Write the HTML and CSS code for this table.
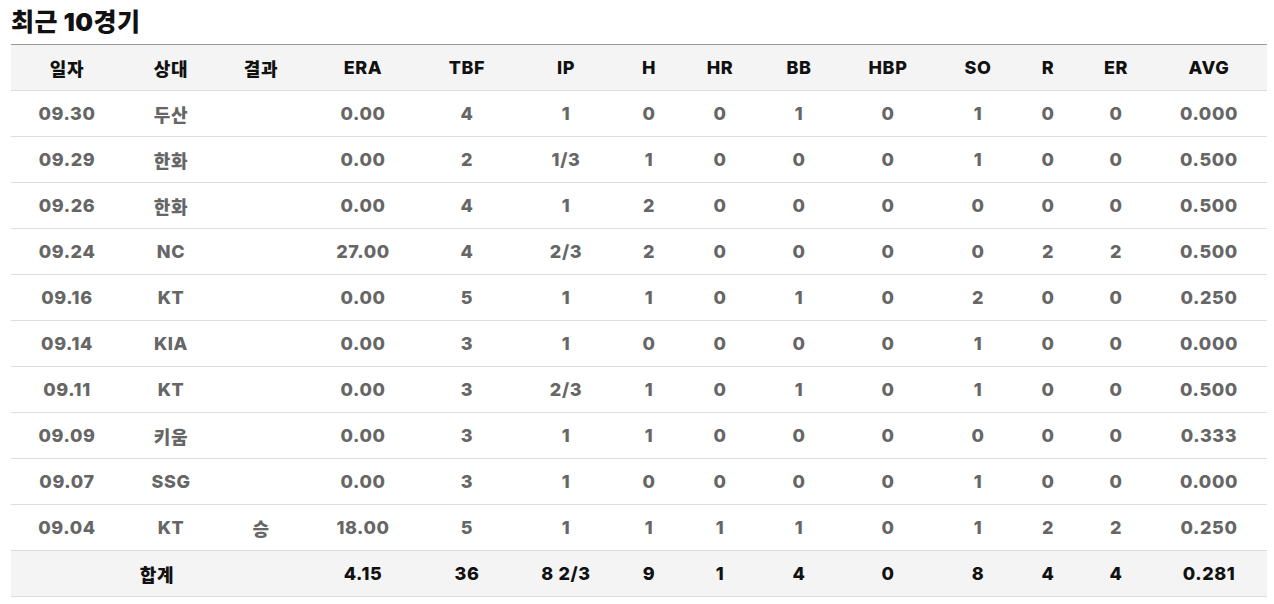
FILE: index.html
```html
<!DOCTYPE html>
<html lang="ko">
<head>
<meta charset="utf-8">
<title>최근 10경기</title>
<link rel="stylesheet" href="styles.css">
</head>
<body>
<section class="recent">
  <h2 class="title">최근 10경기</h2>
  <table class="games">
    <colgroup>
      <col class="c-date"><col class="c-opp"><col class="c-res"><col class="c-era"><col class="c-tbf"><col class="c-ip"><col class="c-h"><col class="c-hr"><col class="c-bb"><col class="c-hbp"><col class="c-so"><col class="c-r"><col class="c-er"><col class="c-avg">
    </colgroup>
    <thead>
      <tr><th>일자</th><th>상대</th><th>결과</th><th>ERA</th><th>TBF</th><th>IP</th><th>H</th><th>HR</th><th>BB</th><th>HBP</th><th>SO</th><th>R</th><th>ER</th><th>AVG</th></tr>
    </thead>
    <tbody>
      <tr><td>09.30</td><td>두산</td><td></td><td>0.00</td><td>4</td><td>1</td><td>0</td><td>0</td><td>1</td><td>0</td><td>1</td><td>0</td><td>0</td><td>0.000</td></tr>
      <tr><td>09.29</td><td>한화</td><td></td><td>0.00</td><td>2</td><td>1/3</td><td>1</td><td>0</td><td>0</td><td>0</td><td>1</td><td>0</td><td>0</td><td>0.500</td></tr>
      <tr><td>09.26</td><td>한화</td><td></td><td>0.00</td><td>4</td><td>1</td><td>2</td><td>0</td><td>0</td><td>0</td><td>0</td><td>0</td><td>0</td><td>0.500</td></tr>
      <tr><td>09.24</td><td>NC</td><td></td><td>27.00</td><td>4</td><td>2/3</td><td>2</td><td>0</td><td>0</td><td>0</td><td>0</td><td>2</td><td>2</td><td>0.500</td></tr>
      <tr><td>09.16</td><td>KT</td><td></td><td>0.00</td><td>5</td><td>1</td><td>1</td><td>0</td><td>1</td><td>0</td><td>2</td><td>0</td><td>0</td><td>0.250</td></tr>
      <tr><td>09.14</td><td>KIA</td><td></td><td>0.00</td><td>3</td><td>1</td><td>0</td><td>0</td><td>0</td><td>0</td><td>1</td><td>0</td><td>0</td><td>0.000</td></tr>
      <tr><td>09.11</td><td>KT</td><td></td><td>0.00</td><td>3</td><td>2/3</td><td>1</td><td>0</td><td>1</td><td>0</td><td>1</td><td>0</td><td>0</td><td>0.500</td></tr>
      <tr><td>09.09</td><td>키움</td><td></td><td>0.00</td><td>3</td><td>1</td><td>1</td><td>0</td><td>0</td><td>0</td><td>0</td><td>0</td><td>0</td><td>0.333</td></tr>
      <tr><td>09.07</td><td>SSG</td><td></td><td>0.00</td><td>3</td><td>1</td><td>0</td><td>0</td><td>0</td><td>0</td><td>1</td><td>0</td><td>0</td><td>0.000</td></tr>
      <tr><td>09.04</td><td>KT</td><td>승</td><td>18.00</td><td>5</td><td>1</td><td>1</td><td>1</td><td>1</td><td>0</td><td>1</td><td>2</td><td>2</td><td>0.250</td></tr>
    </tbody>
    <tfoot>
      <tr><td colspan="3">합계</td><td>4.15</td><td>36</td><td>8 2/3</td><td>9</td><td>1</td><td>4</td><td>0</td><td>8</td><td>4</td><td>4</td><td>0.281</td></tr>
    </tfoot>
  </table>
</section>
</body>
</html>
```

FILE: styles.css
```css
html, body {
  margin: 0;
  padding: 0;
  background: #ffffff;
}
body {
  font-family: Inter, "Noto Sans CJK KR", sans-serif;
}
.recent {
  padding: 6px 7px 0 11px;
}
.title {
  margin: 0 0 6px 0;
  font-size: 25px;
  line-height: 32px;
  font-weight: 900;
  color: #111111;
  letter-spacing: 0.5px;
}
.games {
  width: 1256px;
  border-collapse: collapse;
  table-layout: fixed;
  border-top: 1px solid #9a9a9a;
}
.c-date { width: 112px; }
.c-opp { width: 96px; }
.c-res { width: 84px; }
.c-era { width: 120px; }
.c-tbf { width: 88px; }
.c-ip { width: 110px; }
.c-h { width: 56px; }
.c-hr { width: 86px; }
.c-bb { width: 72px; }
.c-hbp { width: 106px; }
.c-so { width: 74px; }
.c-r { width: 66px; }
.c-er { width: 70px; }
.c-avg { width: 116px; }
.games th,
.games td {
  height: 45px;
  padding: 0;
  text-align: center;
  border-bottom: 1px solid #dddddd;
  font-size: 18px;
  font-weight: 800;
  letter-spacing: 0.6px;
}
.games thead th {
  background: #f4f4f4;
  color: #111111;
}
.games tbody td {
  color: #666666;
}
.games tfoot td {
  background: #f4f4f4;
  color: #111111;
}
```
